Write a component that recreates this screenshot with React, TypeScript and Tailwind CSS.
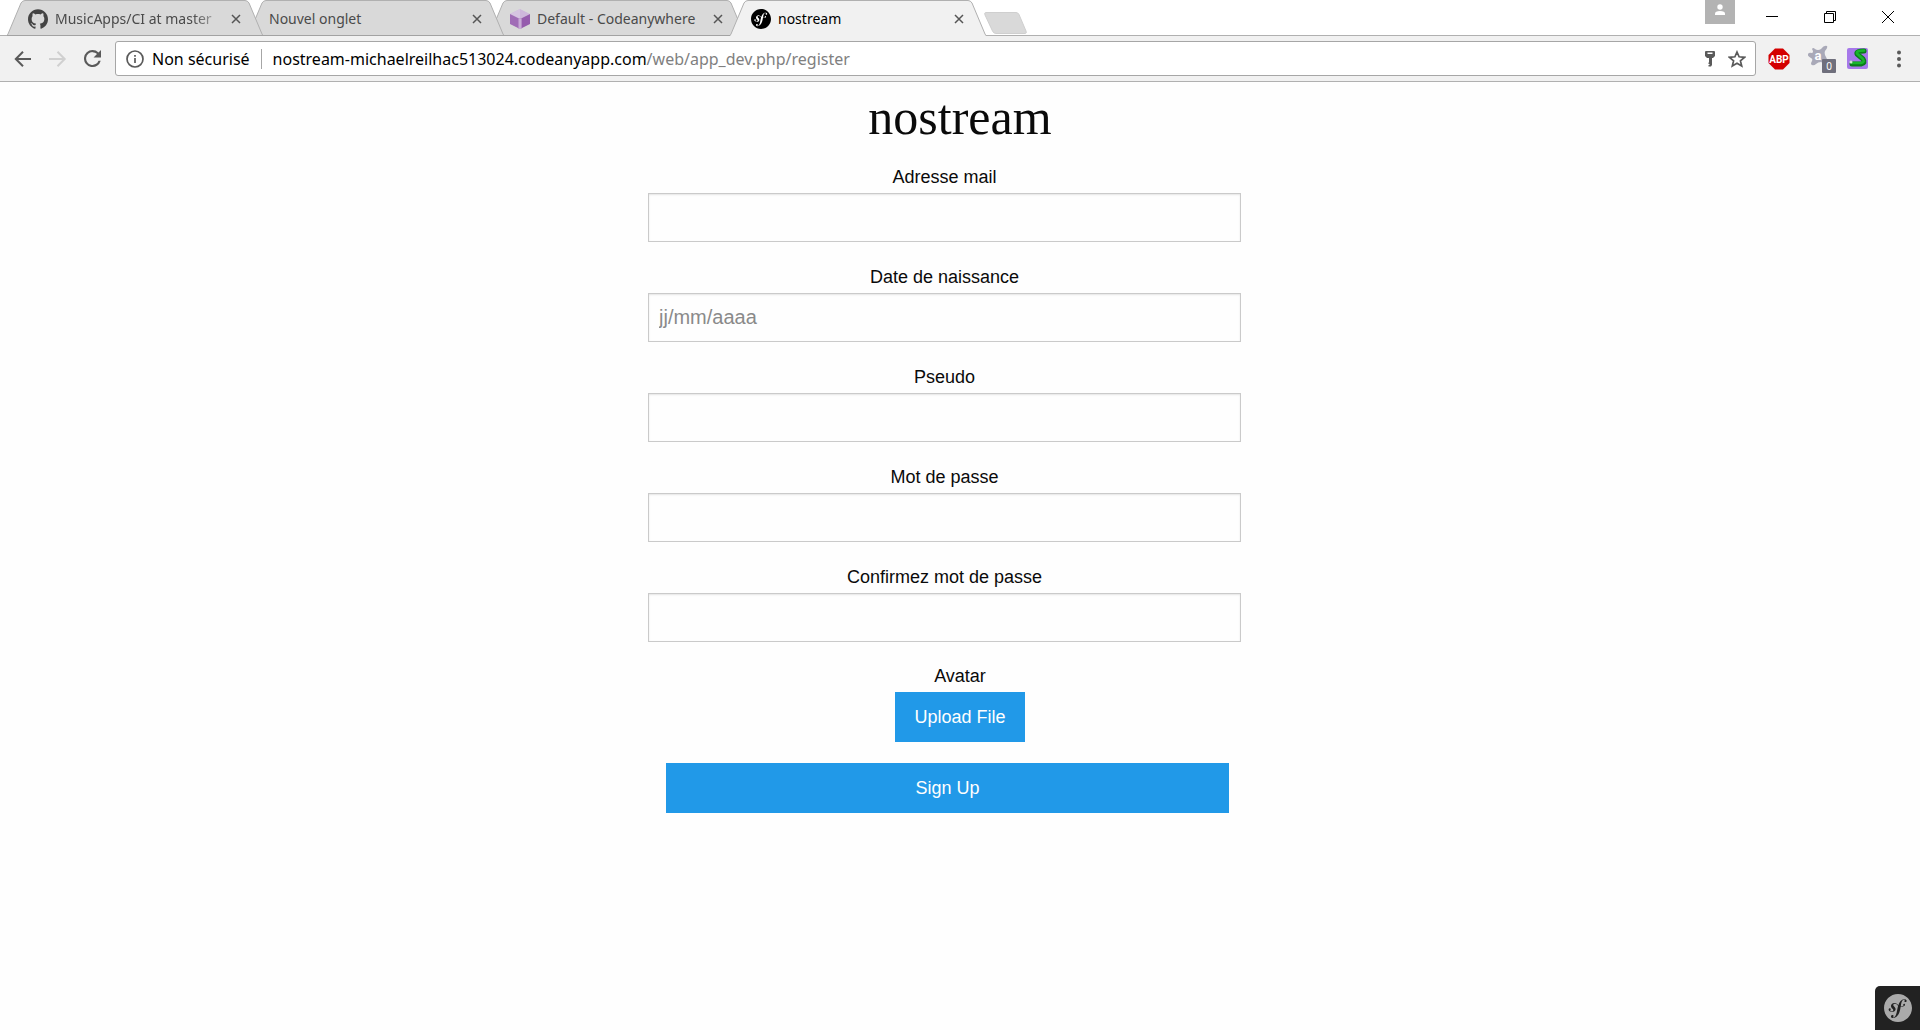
import { useState } from "react";
import { SiSymfony, SiGithub } from "react-icons/si";

const ui = "font-['Noto_Sans','Segoe_UI',sans-serif]";

function Codeanywhere() {
  return (
    <svg viewBox="0 0 20 20" className="size-5 shrink-0" aria-hidden="true">
      <path d="M10 0 20 5 10 10 0 5Z" fill="#cdb6db" />
      <path d="M10 0V10L0 5Z" fill="#d6c4e1" />
      <path d="M0 5 10 10V20L0 15Z" fill="#a06cb6" />
      <path d="M20 5 10 10V20L20 15Z" fill="#955bad" />
      <path d="M8 9 10 10 12 9V19L10 20 8 19Z" fill="#b48ac6" />
      <path d="M10 10V20" stroke="#dccbe6" strokeWidth="1" />
    </svg>
  );
}

function SymfonyBadge({ disc, mark, size }: { disc: string; mark: string; size: string }) {
  return (
    <span className={`flex shrink-0 rounded-full ${mark} ${size}`}>
      <SiSymfony className={`size-full ${disc}`} aria-hidden="true" />
    </span>
  );
}

type TabData = { title: string; icon?: "github" | "cube" | "symfony"; z: string; active?: boolean };

const tabs: TabData[] = [
  { title: "MusicApps/CI at master", icon: "github", z: "z-30" },
  { title: "Nouvel onglet", z: "z-20" },
  { title: "Default - Codeanywhere", icon: "cube", z: "z-10" },
  { title: "nostream", icon: "symfony", z: "z-40", active: true },
];

function Tab({ title, icon, z, active }: TabData) {
  return (
    <div className={`relative -mr-[15px] h-9 w-64 min-w-0 ${z}`}>
      <svg viewBox="0 0 256 36" preserveAspectRatio="none" className="absolute inset-0 size-full" aria-hidden="true">
        <path
          d="M0 36 1 34 14 3Q15.500 .5 18 .5H238Q240.500 .5 242 3L255 34 256 36Z"
          fill={active ? "#f1f1f1" : "#d9d9d9"}
        />
        <path
          d="M0 35.500 1 34 14 3Q15.500 .5 18 .5H238Q240.500 .5 242 3L255 34 256 35.500"
          fill="none"
          stroke="#b0b0b0"
        />
        {!active && <path d="M0 35.500H256" stroke="#a2a2a2" />}
      </svg>
      <div className="relative flex h-full items-center gap-1 pt-[2px] pr-[22px] pl-[21px]">
        <button type="button" className={`flex min-w-0 flex-1 items-center gap-[7px] text-left text-[14px] leading-5 ${active ? "text-black" : "text-[#4a4a4a]"}`}>
          {icon === "github" && <SiGithub className="size-5 shrink-0 text-[#444]" aria-hidden="true" />}
          {icon === "cube" && <Codeanywhere />}
          {icon === "symfony" && <SymfonyBadge size="size-5" disc="text-black" mark="bg-white" />}
          <span className={`min-w-0 flex-1 whitespace-nowrap ${icon === "github" ? "[mask-image:linear-gradient(to_right,black_80%,transparent)]" : ""}`}>{title}</span>
        </button>
        <button type="button" aria-label={`Fermer ${title}`} className="shrink-0">
          <svg viewBox="0 0 10 10" className="size-[10px]" stroke="#555" strokeWidth="1.500" aria-hidden="true">
            <path d="M1 1 9 9M9 1 1 9" />
          </svg>
        </button>
      </div>
    </div>
  );
}

function TabStrip() {
  return (
    <div className="flex h-9 items-start justify-between border-b border-[#b0b0b0] bg-white">
      <div className="flex min-w-0 pl-[7px]">
        {tabs.map((t) => (
          <Tab key={t.title} {...t} />
        ))}
        <button type="button" aria-label="Nouvel onglet" className="mt-[9px] ml-[13px] shrink-0">
          <svg viewBox="0 0 43 22" className="h-[22px] w-[43px]" aria-hidden="true">
            <path d="M2 .5H32Q34 .5 35 2.500L42 19Q43 21.500 41 21.500H12Q9.500 21.500 8.500 19L1 3Q0 .5 2 .5Z" fill="#d9d9d9" stroke="#cfcfcf" />
          </svg>
        </button>
      </div>
      <div className="flex shrink-0 items-start">
        <button type="button" aria-label="Profil" className="mr-[31px] flex h-6 w-[30px] justify-center bg-[#b3b3b3] pt-1">
          <svg viewBox="0 0 12 12" className="size-3" fill="#fff" aria-hidden="true">
            <circle cx="6" cy="3" r="2.700" />
            <path d="M1 11V9.500Q1 7 6 7T11 9.500V11Z" />
          </svg>
        </button>
        <div className="flex gap-[46px] pt-[11px] pr-[26px]">
          <button type="button" aria-label="Réduire">
            <svg viewBox="0 0 12 12" className="size-3" aria-hidden="true"><path d="M0 5.500H12" stroke="#000" /></svg>
          </button>
          <button type="button" aria-label="Restaurer">
            <svg viewBox="0 0 12 12" className="size-3" fill="none" stroke="#000" aria-hidden="true">
              <path d="M.5 2.500H9.500V11.500H.5ZM2.500 2.500V.5H11.500V9.500H9.500" />
            </svg>
          </button>
          <button type="button" aria-label="Fermer">
            <svg viewBox="0 0 12 12" className="size-3" stroke="#000" aria-hidden="true"><path d="M0 0 12 12M12 0 0 12" /></svg>
          </button>
        </div>
      </div>
    </div>
  );
}

function Toolbar() {
  return (
    <div className="flex h-[46px] items-center border-b border-[#b0b0b0] bg-[#f1f1f1] pl-[14px]">
      <div className="flex shrink-0 items-center gap-[17px]">
        <button type="button" aria-label="Précédent">
          <svg viewBox="0 0 18 16" className="h-4 w-[18px]" fill="none" stroke="#5a5a5a" strokeWidth="2" aria-hidden="true">
            <path d="M17 8H2M9 .8 1.800 8 9 15.200" />
          </svg>
        </button>
        <button type="button" aria-label="Suivant" disabled>
          <svg viewBox="0 0 18 16" className="h-4 w-[18px]" fill="none" stroke="#d0d0d0" strokeWidth="2" aria-hidden="true">
            <path d="M0 8H15.500M8.500 .8 15.700 8 8.500 15.200" />
          </svg>
        </button>
        <button type="button" aria-label="Actualiser">
          <svg viewBox="4 4 16 16" className="size-[17px]" fill="#5a5a5a" aria-hidden="true">
            <path d="M17.650 6.350A7.960 7.960 0 0 0 12 4a8 8 0 1 0 7.730 10h-2.080A6 6 0 1 1 12 6c1.660 0 3.140.69 4.220 1.780L13 11h7V4z" />
          </svg>
        </button>
      </div>
      <div className="ml-[14px] flex h-[35px] min-w-0 flex-1 items-center rounded-[3px] border border-[#a6a6a6] bg-white pr-[9px] pl-[10px]">
        <svg viewBox="0 0 18 18" className="size-[18px] shrink-0" fill="none" stroke="#5a5a5a" strokeWidth="1.700" aria-hidden="true">
          <circle cx="9" cy="9" r="8" />
          <path d="M9 8V13M9 5V6.700" />
        </svg>
        <span className="ml-2 shrink-0 text-[16px] leading-6">Non sécurisé</span>
        <span className="mx-[11px] h-5 w-px shrink-0 bg-[#a6a6a6]" />
        <a href="#register" className="min-w-0 flex-1 truncate text-[16px] leading-6 text-black">
          nostream-michaelreilhac513024.codeanyapp.com<span className="text-[#808080]">/web/app_dev.php/register</span>
        </a>
        <button type="button" aria-label="Mots de passe" className="mr-[12px] shrink-0">
          <svg viewBox="0 0 12 16" className="h-4 w-3" fill="#5a5a5a" aria-hidden="true">
            <path fillRule="evenodd" d="M2 0H10Q11 0 11 1V5L9 7H8V14L7 15.500H4.500V14H5.500V13H4.500V11.500H5V7H3L1 5V1Q1 0 2 0ZM3.500 1.500V3H8.500V1.500Z" />
          </svg>
        </button>
        <button type="button" aria-label="Ajouter aux favoris" className="shrink-0">
          <svg viewBox="0 0 18 18" className="size-[18px]" fill="none" stroke="#5a5a5a" strokeWidth="1.700" aria-hidden="true">
            <path d="M9 2 11.100 6.800 16.500 7.300 12.400 10.800 13.700 16 9 13.200 4.300 16 5.600 10.800 1.500 7.300 6.900 6.800Z" />
          </svg>
        </button>
      </div>
      <div className="flex shrink-0 items-center pr-[19px] pl-3">
        <button type="button" aria-label="Adblock Plus">
          <svg viewBox="0 0 22 22" className="size-[22px]" aria-hidden="true">
            <path d="M7 .5H15L21.500 7V15L15 21.500H7L.5 15V7Z" fill="#d40000" />
            <text x="11" y="14.500" textAnchor="middle" fontSize="10" fontWeight="700" fill="#fff" fontFamily="Roboto, sans-serif">ABP</text>
          </svg>
        </button>
        <button type="button" aria-label="Avast" className="ml-[18px]">
          <svg viewBox="0 0 29 28" className="h-[28px] w-[29px]" aria-hidden="true">
            <path d="M4 4Q5 2 7 4Q10 6 13 4Q16 0 19 1Q20 3 17 6Q16 9 18 12Q20 15 18 17Q16 19 13 17Q10 17 8 19Q6 21 4 20Q2 19 4 16Q5 14 3 13Q-1 11 0 9Q1 7 4 8Q6 7 4 4Z" fill="#a9a9b8" />
            <text x="10" y="15" textAnchor="middle" fontSize="13" fontWeight="700" fill="#fff" fontFamily="Roboto, sans-serif">a</text>
            <rect x="14" y="14" width="14" height="14" rx="1" fill="#6f6f7c" />
            <text x="21" y="25" textAnchor="middle" fontSize="10" fill="#fff" fontFamily="Noto Sans, sans-serif">0</text>
          </svg>
        </button>
        <button type="button" aria-label="Slither" className="ml-[10px]">
          <svg viewBox="0 0 21 21" className="size-[21px]" aria-hidden="true">
            <rect width="21" height="21" rx="2" fill="#a678ea" />
            <path d="M17 3Q9 3 10 6L16 11Q19 15 14 16H5" fill="none" stroke="#0a7d1a" strokeWidth="5" strokeLinecap="round" strokeLinejoin="round" />
            <path d="M17 2.500Q9 2.500 10 5.500L16 11Q18 14.500 14 15H5" fill="none" stroke="#18b52c" strokeWidth="2.500" strokeLinecap="round" strokeLinejoin="round" />
            <circle cx="4" cy="14" r="1.500" fill="#cfe8cf" />
          </svg>
        </button>
        <button type="button" aria-label="Menu" className="ml-[29px]">
          <svg viewBox="0 0 4 18" className="h-[18px] w-1" fill="#5a5a5a" aria-hidden="true">
            <circle cx="2" cy="2.500" r="2" /><circle cx="2" cy="9" r="2" /><circle cx="2" cy="15.500" r="2" />
          </svg>
        </button>
      </div>
    </div>
  );
}

const fields = [
  { id: "mail", label: "Adresse mail", type: "email" },
  { id: "naissance", label: "Date de naissance", type: "text", placeholder: "jj/mm/aaaa" },
  { id: "pseudo", label: "Pseudo", type: "text" },
  { id: "passe", label: "Mot de passe", type: "password" },
  { id: "confirmation", label: "Confirmez mot de passe", type: "password" },
];

export default function App() {
  const [values, setValues] = useState<Record<string, string>>({});
  return (
    <div className="flex min-h-screen flex-col bg-[#fefefe]">
      <header className={ui}>
        <TabStrip />
        <Toolbar />
      </header>
      <main className="flex-1 font-['Liberation_Sans',Arial,sans-serif] text-[#0a0a0a]">
        <h1 className="text-center font-['Liberation_Serif','Times_New_Roman',serif] text-[50px] leading-[70px]">nostream</h1>
        <form className="mx-auto w-full max-w-[624px] pt-[10px] text-center text-[18px]" onSubmit={(e) => e.preventDefault()}>
          <div className="flex flex-col gap-5 pr-[31px]">
            {fields.map((f) => (
              <div key={f.id}>
                <label htmlFor={f.id} className="block h-[31px] leading-[31px]">{f.label}</label>
                <input
                  id={f.id}
                  type={f.type}
                  placeholder={f.placeholder}
                  value={values[f.id] ?? ""}
                  onChange={(e) => setValues({ ...values, [f.id]: e.target.value })}
                  className="block h-[49px] w-full border border-[#cacaca] bg-[#fefefe] px-[10px] text-[20px] shadow-[inset_0_1px_2px_rgba(10,10,10,0.1)] placeholder:text-[#8a8a8a]"
                />
              </div>
            ))}
          </div>
          <div className="mt-[19px] flex flex-col items-center">
            <span className="leading-[31px]">Avatar</span>
            <label htmlFor="avatar" className="block h-[50px] w-[130px] cursor-pointer bg-[#2199e8] leading-[50px] text-[#fefefe]">Upload File</label>
            <input id="avatar" type="file" className="sr-only" />
          </div>
          <div className="mt-[21px] pr-[43px] pl-[18px]">
            <button type="submit" className="block h-[50px] w-full bg-[#2199e8] text-[#fefefe]">Sign Up</button>
          </div>
        </form>
      </main>
      <button type="button" aria-label="Symfony" className="fixed right-0 bottom-0 flex h-11 w-[45px] items-center justify-center rounded-tl-[5px] bg-[#222]">
        <SymfonyBadge size="size-7" disc="text-[#aaa]" mark="bg-[#222]" />
      </button>
    </div>
  );
}
